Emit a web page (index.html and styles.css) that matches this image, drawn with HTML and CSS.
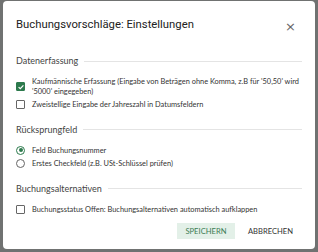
FILE: index.html
```html
<!DOCTYPE html>
<html lang="de">

<head>
	<meta charset="UTF-8">
	<meta name="viewport" content="width=device-width, initial-scale=1.0">
	<title>Buchungsvorschläge: Einstellungen</title>
	<link rel="stylesheet" href="styles.css">
</head>

<body>
	<div class="dialog">
		<div class="dialog-header">
			<h1 class="dialog-title">Buchungsvorschläge: Einstellungen</h1>
			<button type="button" class="close">&times;</button>
		</div>

		<section class="group">
			<h2 class="group-title">Datenerfassung</h2>
			<label class="option">
				<span class="checkbox is-checked">
					<svg viewBox="0 0 10 10" width="8" height="8"><path d="M2 5.2 L4.1 7.2 L8 3" fill="none" stroke="#fff" stroke-width="1.5"/></svg>
				</span>
				<span class="option-text">Kaufmännische Erfassung (Eingabe von Beträgen ohne Komma, z.B für '50,50' wird '5000' eingegeben)</span>
			</label>
			<label class="option">
				<span class="checkbox"></span>
				<span class="option-text">Zweistellige Eingabe der Jahreszahl in Datumsfeldern</span>
			</label>
		</section>

		<section class="group">
			<h2 class="group-title">Rücksprungfeld</h2>
			<label class="option">
				<span class="radio is-checked"></span>
				<span class="option-text">Feld Buchungsnummer</span>
			</label>
			<label class="option">
				<span class="radio"></span>
				<span class="option-text">Erstes Checkfeld (z.B. USt-Schlüssel prüfen)</span>
			</label>
		</section>

		<section class="group">
			<h2 class="group-title">Buchungsalternativen</h2>
			<label class="option">
				<span class="checkbox"></span>
				<span class="option-text">Buchungsstatus Offen: Buchungsalternativen automatisch aufklappen</span>
			</label>
		</section>

		<div class="dialog-actions">
			<button type="button" class="btn btn-primary">Speichern</button>
			<button type="button" class="btn">Abbrechen</button>
		</div>
	</div>
</body>

</html>
```

FILE: styles.css
```css
*,
*::before,
*::after {
	box-sizing: border-box;
}

body {
	margin: 0;
	padding: 1px 3px 3px 3px;
	height: 252px;
	background-color: #707271;
	font-family: Lato, "Liberation Sans", sans-serif;
	color: #333333;
}

.dialog {
	width: 312px;
	height: 248px;
	background-color: #ffffff;
	border-radius: 4px;
	padding: 0 9px 0 13px;
	display: flex;
	flex-direction: column;
}

.dialog-header {
	display: flex;
	align-items: center;
	justify-content: space-between;
	height: 46px;
	padding-top: 1px;
	margin-bottom: 9px;
}

.dialog-title {
	margin: 0;
	font-family: Roboto, sans-serif;
	font-weight: 400;
	font-size: 11.3px;
	color: #222222;
}

.close {
	border: 0;
	background: none;
	padding: 0;
	margin-right: 10px;
	margin-top: 4px;
	font-size: 13px;
	line-height: 1;
	color: #666666;
	font-family: "DejaVu Sans", sans-serif;
}

.group-title {
	display: flex;
	align-items: center;
	gap: 6px;
	width: 286px;
	margin: 0 0 11px;
	font-weight: 400;
	font-size: 9px;
	line-height: 10px;
	color: #444444;
}

.group-title::after {
	content: '';
	flex: 1;
	border-top: 1px solid #e4e4e4;
}

.group + .group {
	margin-top: 11px;
}

.option {
	display: flex;
	align-items: center;
	gap: 7px;
	font-size: 7.4px;
	line-height: 9.5px;
	margin-bottom: 4px;
}

.checkbox {
	flex: none;
	width: 9px;
	height: 9px;
	border: 1px solid #666666;
	border-radius: 1px;
	display: grid;
	place-items: center;
}

.checkbox.is-checked {
	background-color: #2d7a4d;
	border-color: #2d7a4d;
}

.radio {
	flex: none;
	width: 9px;
	height: 9px;
	border: 1px solid #666666;
	border-radius: 50%;
	display: grid;
	place-items: center;
}

.radio.is-checked {
	border-color: #2d7a4d;
}

.radio.is-checked::before {
	content: '';
	width: 4px;
	height: 4px;
	border-radius: 50%;
	background-color: #2d7a4d;
}

.dialog-actions {
	margin-top: auto;
	margin-bottom: 10px;
	display: flex;
	justify-content: flex-end;
	gap: 9px;
	padding-right: 9px;
}

.btn {
	border: 0;
	background: none;
	font-family: Lato, sans-serif;
	font-size: 7.6px;
	text-transform: uppercase;
	color: #333333;
	height: 16px;
	padding: 0 4px;
}

.btn-primary {
	width: 58px;
	background-color: #e3f0e8;
	color: #3c7d55;
}
```
